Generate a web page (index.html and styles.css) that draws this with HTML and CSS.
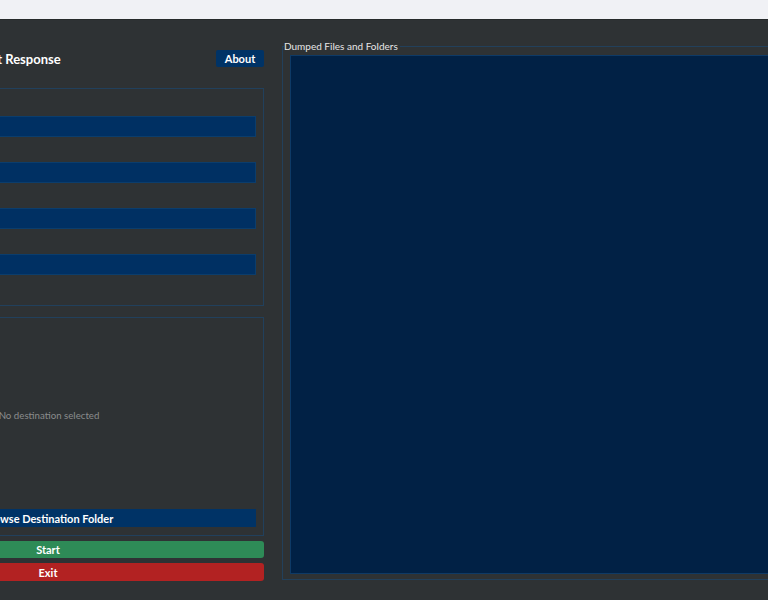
FILE: index.html
```html
<!DOCTYPE html>
<html lang="en">
<head>
  <meta charset="UTF-8" />
  <meta name="viewport" content="width=device-width, initial-scale=1.0"/>
  <title>Incident Response</title>
  <link rel="stylesheet" href="styles.css">
</head>
<body>
  <div class="titlebar"></div>

  <div class="window">
    <div class="left">
      <div class="header">
        <h1>Incident Response</h1>
        <button class="about">About</button>
      </div>

      <div class="group inputs">
        <input type="text">
        <input type="text">
        <input type="text">
        <input type="text">
      </div>

      <div class="group dest">
        <div class="dest-label">No destination selected</div>
        <button class="browse">Browse Destination Folder</button>
      </div>

      <button class="start">Start</button>
      <button class="exit">Exit</button>
    </div>

    <fieldset class="right">
      <legend>Dumped Files and Folders</legend>
      <div class="tree"></div>
    </fieldset>
  </div>
</body>
</html>
```

FILE: styles.css
```css
html, body {
  margin: 0;
  height: 100%;
  overflow: hidden;
}

body {
  background-color: #2e3234;
  color: #fff;
  font-family: Lato, sans-serif;
  font-size: 10px;
}

.titlebar {
  height: 19px;
  background-color: #f0f1f5;
  border-bottom: 1px solid #262a2b;
}

.window {
  display: flex;
  gap: 18px;
  margin-left: -168px;
  padding-top: 19px;
}

.left {
  width: 432px;
  flex-shrink: 0;
  display: flex;
  flex-direction: column;
  padding-top: 11px;
}

.header {
  display: flex;
  align-items: center;
  justify-content: space-between;
  height: 17px;
  padding-left: 123px;
}

h1 {
  margin: 0;
  font-size: 13px;
  font-weight: bold;
}

button {
  font-family: Lato, sans-serif;
  font-size: 11px;
  font-weight: bold;
  color: #fff;
  border: none;
  cursor: pointer;
}

.about {
  width: 48px;
  height: 17px;
  padding: 0;
  background-color: #003366;
  border-radius: 2px;
}

.group {
  border: 1px solid #21405c;
  padding: 0 7px 0 7px;
}

.inputs {
  margin-top: 21px;
  box-sizing: border-box;
  height: 218px;
  display: flex;
  flex-direction: column;
  gap: 25px;
  padding-top: 27px;
}

input {
  height: 21px;
  box-sizing: border-box;
  background-color: #003063;
  border: 1px solid #0b3d6c;
  color: #fff;
  margin: 0;
}

.dest {
  margin-top: 11px;
  height: 219px;
  box-sizing: border-box;
  display: flex;
  flex-direction: column;
  padding-top: 7px;
  padding-bottom: 8px;
}

.dest-label {
  flex: 1;
  display: flex;
  align-items: center;
  justify-content: center;
  color: #8a8c8d;
  padding-bottom: 4px;
  padding-left: 2px;
  font-size: 9.7px;
}

.browse {
  height: 18px;
  padding: 0;
  background-color: #003366;
}

.start, .exit {
  padding: 0;
  border-radius: 3px;
  margin-top: 5px;
}

.start {
  height: 17px;
  background-color: #2e8b57;
}

.exit {
  height: 18px;
  background-color: #b22222;
}

.right {
  flex: 1;
  min-width: 520px;
  margin: 0;
  padding: 0 7px 7px 7px;
  border: 1px solid #22405b;
  height: 541px;
  box-sizing: border-box;
}

legend {
  margin-left: -6px;
  padding: 0 2px 0 0;
  color: #e6e6e6;
  line-height: 15px;
  font-size: 10px;
}

.tree {
  height: 517px;
  margin-top: 1px;
  background-color: #012145;
  border: 1px solid #0e3a66;
}
```
